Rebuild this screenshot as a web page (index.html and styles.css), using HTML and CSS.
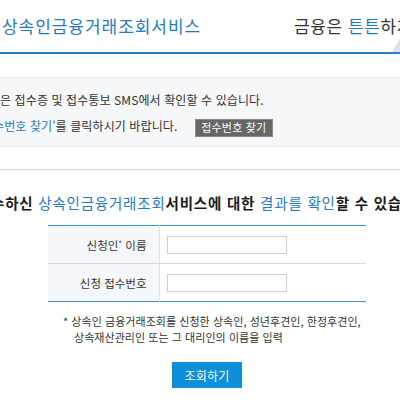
FILE: index.html
```html
<!DOCTYPE html>
<html lang="ko">
<head>
<meta charset="utf-8">
<title>상속인금융거래조회서비스</title>
<link rel="stylesheet" href="styles.css">
</head>
<body>
<div class="page">
  <header class="header">
    <h1 class="title">상속인금융거래조회서비스</h1>
    <p class="slogan">금융은 <span class="blue">튼튼</span>하게</p>
    <span class="deco"></span>
  </header>

  <section class="info">
    <p class="info-line first">은 접수증 및 접수통보 SMS에서 확인할 수 있습니다.</p>
    <p class="info-line second"><span class="blue">수번호 찾기'</span>를 클릭하시기 바랍니다. <button class="btn-find" type="button">접수번호 찾기</button></p>
  </section>

  <section class="result">
    <h2 class="heading">수하신 <span class="hl">상속인금융거래조회</span>서비스에 대한 <span class="hl">결과를 확인</span>할 수 있습</h2>

    <div class="form-area">
      <table class="form">
        <tr>
          <th>신청인<sup>*</sup> 이름</th>
          <td><input class="field" type="text"></td>
        </tr>
        <tr>
          <th>신청 접수번호</th>
          <td><input class="field" type="text"></td>
        </tr>
      </table>
      <p class="note">* 상속인 금융거래조회를 신청한 상속인, 성년후견인, 한정후견인,<br>상속재산관리인 또는 그 대리인의 이름을 입력</p>
      <div class="actions"><button class="btn-search" type="button">조회하기</button></div>
    </div>
  </section>
</div>
</body>
</html>
```

FILE: styles.css
```css
* { box-sizing: border-box; }
html, body { margin: 0; padding: 0; background: #fff; }
body {
  font-family: "Noto Sans CJK KR", "Noto Sans", sans-serif;
  color: #333;
  width: 400px;
  height: 400px;
  overflow: hidden;
}
.page { width: 400px; overflow: hidden; }
.blue { color: #1f7bc4; }

.header {
  position: relative;
  display: grid;
  grid-template-columns: 294px max-content;
  align-items: center;
  height: 54px;
  border-bottom: 2px solid #2a80c6;
  overflow: hidden;
}
.title {
  margin: 0;
  padding-left: 2px;
  font-size: 17px;
  font-weight: normal;
  color: #1f7bc4;
  line-height: 20px;
  white-space: nowrap;
  letter-spacing: 0.95px;
}
.slogan {
  margin: 0;
  font-size: 17px;
  line-height: 20px;
  color: #333;
  white-space: nowrap;
  letter-spacing: 0.6px;
}
.deco {
  position: absolute;
  right: 0;
  bottom: 0;
  width: 8px;
  height: 13px;
  background: #d4e6f5;
  clip-path: polygon(100% 0, 100% 100%, 0 100%);
}

.info {
  margin-top: 23px;
  height: 70px;
  background: #f5f7f9;
  border-top: 1px solid #e8eaee;
  border-bottom: 1px solid #e8eaee;
  padding-top: 9px;
  font-size: 12px;
  letter-spacing: 0.1px;
}
.info-line {
  margin: 0;
  line-height: 26px;
  white-space: nowrap;
}
.info-line.second { margin-left: -7px; }
.btn-find {
  margin-left: 14px;
  height: 18px;
  width: 78px;
  padding: 0;
  border: 1px solid #8a8a8a;
  background: #666;
  color: #fff;
  font-family: inherit;
  font-size: 11px;
  line-height: 15px;
  letter-spacing: 0.2px;
  vertical-align: middle;
}

.result {
  border-top: 1px solid #d9d9d9;
  margin-top: 22px;
  padding-top: 23px;
}
.heading {
  margin: 0 0 0 -9px;
  font-size: 14.5px;
  line-height: 20px;
  font-weight: bold;
  color: #1a1a1a;
  white-space: nowrap;
  letter-spacing: 0.8px;
}
.hl { color: #1f7bc4; font-weight: normal; }

.form-area {
  width: 318px;
  margin-left: 48px;
  margin-top: 12px;
}
.form {
  width: 318px;
  border-collapse: collapse;
  border-top: 1px solid #3896d8;
  border-bottom: 1px solid #3896d8;
}
.form tr + tr { border-top: 1px solid #d8d8d8; }
.form th {
  width: 111px;
  height: 38px;
  background: #f5f7fa;
  border-right: 1px solid #e2e2e2;
  text-align: right;
  padding: 0 12px 0 0;
  font-size: 11.5px;
  font-weight: normal;
  color: #333;
  letter-spacing: 0;
}
.form th sup { font-size: 8px; vertical-align: 3px; line-height: 0; }
.form td { padding: 0 0 0 7px; height: 38px; }
.field {
  display: block;
  width: 120px;
  height: 18px;
  border: 1px solid #d0d0d0;
  background: #fff;
  margin: 0;
}

.note {
  margin: 12px 0 0 15px;
  padding-left: 11px;
  text-indent: -11px;
  font-size: 11px;
  line-height: 15.5px;
  letter-spacing: 0.05px;
  color: #333;
  white-space: nowrap;
}
.actions {
  display: flex;
  justify-content: center;
  margin-top: 17px;
}
.btn-search {
  width: 70px;
  height: 26px;
  border: 0;
  background: #0e8fd9;
  color: #fff;
  font-family: inherit;
  font-size: 12px;
  padding: 0;
  letter-spacing: 0.2px;
}
```
